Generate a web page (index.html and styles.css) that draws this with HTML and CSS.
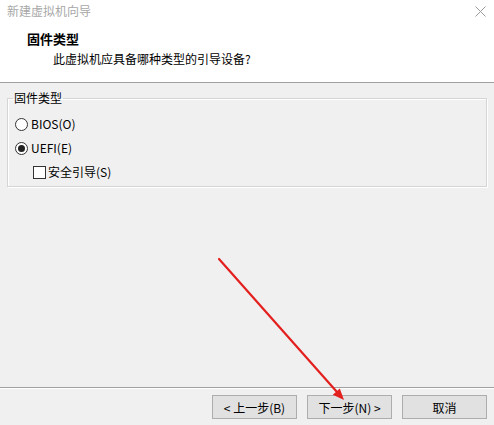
FILE: index.html
```html
<!DOCTYPE html>
<html>
<head>
<meta charset="utf-8">
<link rel="stylesheet" href="styles.css">
</head>
<body>
<div class="window">
  <div class="header">
    <div class="titlebar">
      <span class="title">新建虚拟机向导</span>
      <svg class="close" width="11" height="11" viewBox="0 0 11 11"><path d="M0.5 0.5 L10.5 10.5 M10.5 0.5 L0.5 10.5" stroke="#9a9a9a" stroke-width="1" fill="none"/></svg>
    </div>
    <div class="heading">固件类型</div>
    <div class="subtitle">此虚拟机应具备哪种类型的引导设备?</div>
  </div>
  <div class="content">
    <fieldset class="group">
      <legend class="legend">固件类型</legend>
      <div class="row"><span class="radio"></span><span class="label">BIOS(O)</span></div>
      <div class="row"><span class="radio checked"></span><span class="label">UEFI(E)</span></div>
      <div class="row sub"><span class="check"></span><span class="label2">安全引导(S)</span></div>
    </fieldset>
  </div>
  <div class="footer">
    <button class="btn">&lt; 上一步(B)</button>
    <button class="btn">下一步(N) &gt;</button>
    <button class="btn">取消</button>
  </div>
  <svg class="arrow" width="494" height="425" viewBox="0 0 494 425">
    <line x1="219" y1="259" x2="337" y2="392" stroke="#e3201e" stroke-width="2.2" stroke-linecap="round"/>
    <polygon points="344,400 332.8,394.8 339.8,388.5" fill="#e3201e"/>
  </svg>
</div>
</body>
</html>
```
FILE: styles.css
```css
html, body {
  margin: 0;
  padding: 0;
}
body {
  font-family: "Noto Sans CJK SC", "Noto Sans", sans-serif;
  font-size: 12px;
  color: #000;
  background: #f0f0f0;
}
.window {
  position: relative;
  width: 494px;
  height: 425px;
  display: flex;
  flex-direction: column;
  overflow: hidden;
}
.header {
  background: #fff;
  border-bottom: 1px solid #a0a0a0;
  box-sizing: border-box;
  height: 83px;
}
.titlebar {
  display: flex;
  justify-content: space-between;
  align-items: center;
  height: 20px;
  padding: 1px 8px 0 7px;
}
.title {
  color: #a8a8a8;
  line-height: 18px;
}
.heading {
  font-weight: bold;
  font-size: 13px;
  line-height: 16px;
  margin: 10px 0 0 27px;
}
.subtitle {
  line-height: 16px;
  margin: 4px 0 0 53px;
}
.content {
  flex: 1;
  padding: 8px 7px 0 7px;
}
.group {
  margin: 0;
  padding: 7px 0 2px 5px;
  width: 480px;
  box-sizing: border-box;
  border: 1px solid #d5d5d5;
  box-shadow: inset 1px 1px 0 #fff, 1px 1px 0 #fff;
}
.legend {
  padding: 0 1px;
  line-height: 14px;
}
.row {
  display: flex;
  align-items: center;
  height: 24px;
}
.radio {
  width: 11px;
  height: 11px;
  border: 1px solid #333;
  border-radius: 50%;
  background: #fff;
  margin-left: 2px;
  margin-right: 3px;
  display: flex;
  align-items: center;
  justify-content: center;
}
.radio.checked::after {
  content: "";
  width: 7px;
  height: 7px;
  border-radius: 50%;
  background: #222;
}
.check {
  width: 11px;
  height: 11px;
  border: 1px solid #333;
  background: #fff;
  margin-left: 20px;
  margin-right: 2px;
}
.label, .label2 {
  line-height: 16px;
}
.footer {
  height: 38px;
  box-sizing: border-box;
  border-top: 1px solid #a0a0a0;
  box-shadow: inset 0 1px 0 #fff;
  display: flex;
  justify-content: flex-end;
  gap: 10px;
  padding: 7px 7px 0 0;
}
.btn {
  width: 85px;
  height: 24px;
  margin: 0;
  padding: 0;
  font-family: "Noto Sans CJK SC", "Noto Sans", sans-serif;
  font-size: 12px;
  color: #000;
  background: #e1e1e1;
  border: 1px solid #adadad;
  box-sizing: border-box;
}
.arrow {
  position: absolute;
  left: 0;
  top: 0;
  pointer-events: none;
}
```
